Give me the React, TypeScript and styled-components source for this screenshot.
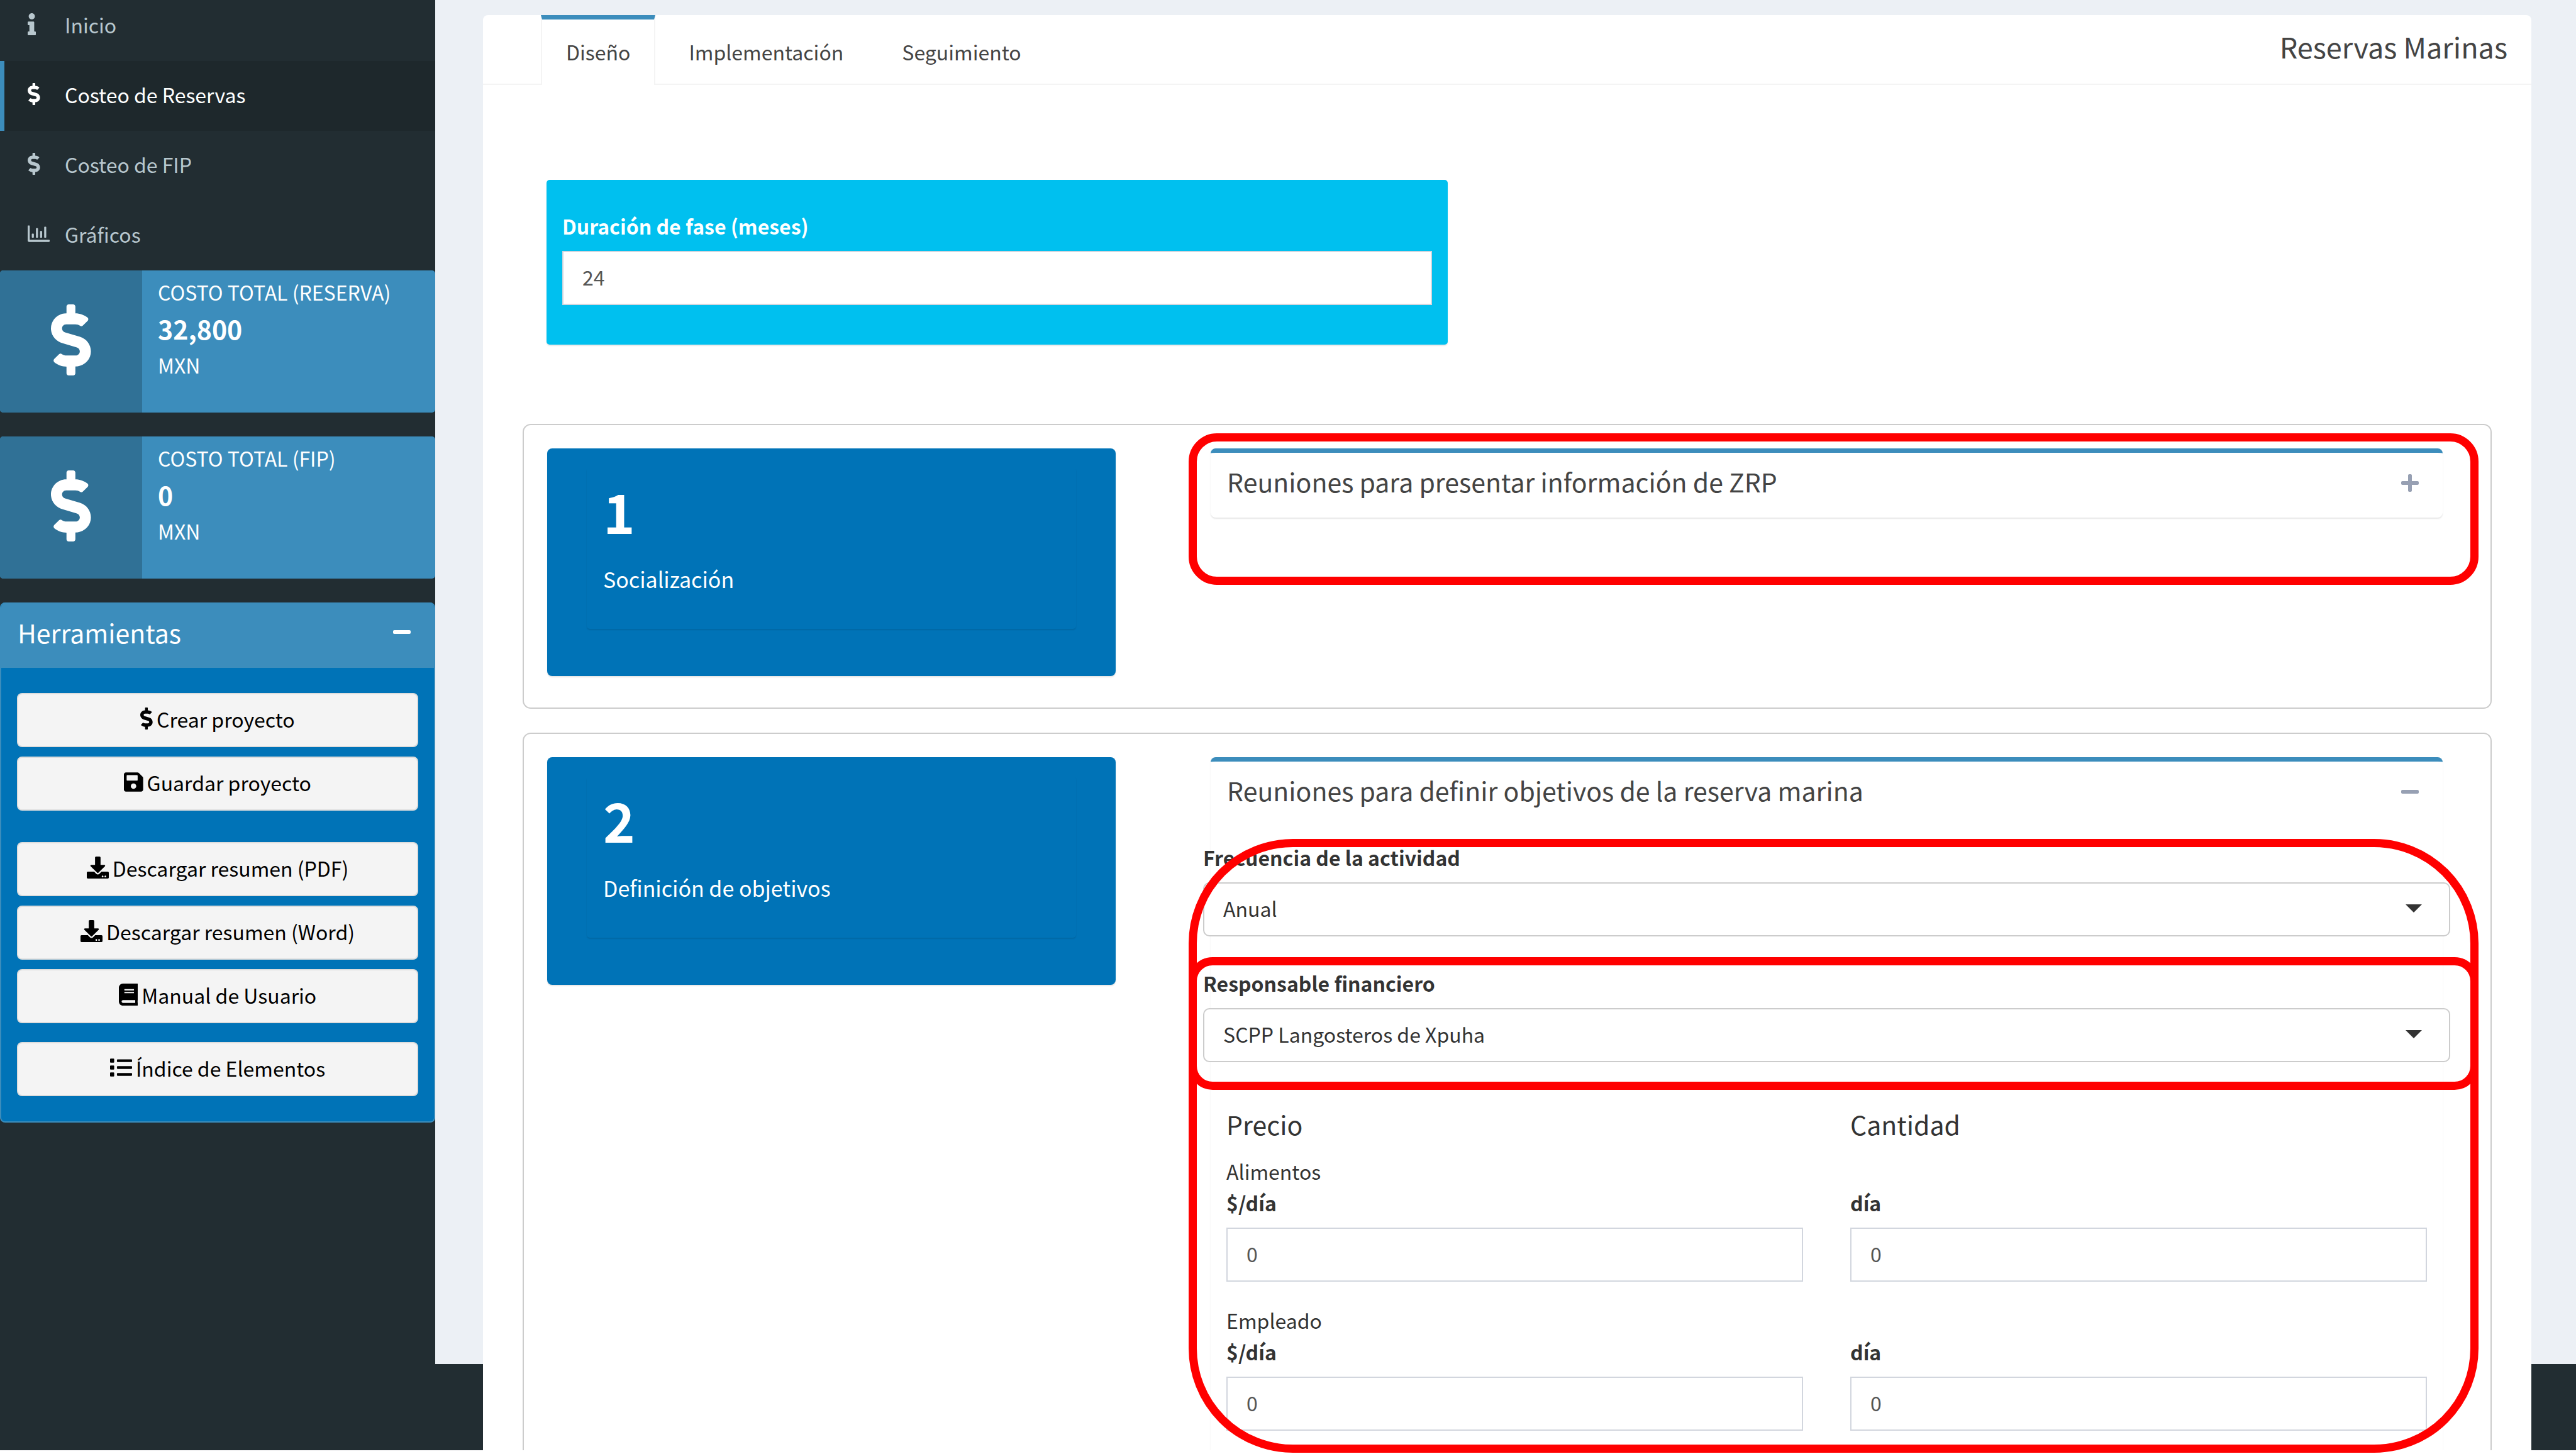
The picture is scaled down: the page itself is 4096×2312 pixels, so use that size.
import React, { useId, useState } from "react";
import styled, { createGlobalStyle, css } from "styled-components";
import type { IconType } from "react-icons";
import {
  FaBook,
  FaDollarSign,
  FaDownload,
  FaInfo,
  FaList,
  FaMinus,
  FaPlus,
  FaRegChartBar,
  FaSave,
} from "react-icons/fa";

const color = {
  dark: "#222d32",
  darker: "#1e282c",
  menuText: "#b8c7ce",
  primary: "#3c8dbc",
  primaryShade: "#307196",
  blue: "#0073b7",
  aqua: "#00c0ef",
  page: "#ecf0f5",
  line: "#f4f4f4",
  wellLine: "#cccccc",
  inputLine: "#d2d6de",
  heading: "#444444",
  text: "#333333",
  mark: "#ff0000",
};

const size = { text: "32px", lead: "34px", title: "41px", page: "45px", big: "86px" };

const GlobalStyle = createGlobalStyle`
  *, *::before, *::after { box-sizing: border-box; }
  body {
    margin: 0;
    background: #ffffff;
    color: ${color.text};
    font-family: "Noto Sans CJK SC", "Noto Sans", sans-serif;
    font-size: ${size.text};
    line-height: 50px;
  }
  button, input, select { font: inherit; color: inherit; margin: 0; }
  h1, h2, h3, p, ul { margin: 0; padding: 0; font-weight: 400; }
  svg { display: block; flex: none; }

  /* Narrow glyphs take only the width they draw */
  svg[viewBox="0 0 192 512"] { width: 0.375em; }
  svg[viewBox="0 0 288 512"] { width: 0.5625em; }
  svg[viewBox="0 0 448 512"] { width: 0.875em; }
`;

const Page = styled.div`
  position: relative;
  display: flex;
  align-items: flex-start;
  height: 100vh;
  overflow: hidden;
  background: ${color.dark};

  &::after {
    content: "";
    position: absolute;
    z-index: 1;
    left: 0;
    right: 0;
    bottom: 0;
    height: 6px;
    background: #ffffff;
  }
`;

/* ---------- Sidebar ---------- */

const Sidebar = styled.aside`
  flex: none;
  width: 692px;
`;

const Menu = styled.ul`
  list-style: none;
  margin-top: -14px;
`;

const MenuLink = styled.a<{ $active?: boolean }>`
  display: flex;
  align-items: center;
  height: 111px;
  padding: 0 13px 6px 37px;
  border-left: 7px solid ${(p) => (p.$active ? color.primary : "transparent")};
  background: ${(p) => (p.$active ? color.darker : "transparent")};
  color: ${(p) => (p.$active ? "#ffffff" : color.menuText)};
  text-decoration: none;
`;

const MenuIcon = styled.span`
  width: 59px;
  font-size: 35px;
`;

const InfoBox = styled.section`
  display: flex;
  height: 226px;
  margin-bottom: 38px;
  border-radius: 5px;
  overflow: hidden;
  background: ${color.primary};
  color: #ffffff;
`;

const InfoIcon = styled.div`
  display: flex;
  align-items: center;
  justify-content: center;
  width: 226px;
  padding-bottom: 5px;
  background: ${color.primaryShade};
  font-size: 113px;
`;

const InfoContent = styled.div`
  padding: 9px 25px;
`;

const InfoNumber = styled.strong`
  display: block;
  font-size: ${size.title};
  line-height: 66px;
`;

const Tools = styled.section`
  border: 2px solid ${color.primary};
  border-top: 0;
  border-radius: 8px;
  overflow: hidden;
  background: ${color.blue};
  color: #ffffff;
`;

const ToolsHeader = styled.header`
  display: flex;
  align-items: center;
  justify-content: space-between;
  padding: 22px 37px 32px 26px;
  background: ${color.primary};
`;

const BoxTitle = styled.h3`
  font-size: ${size.title};
`;

const ToggleButton = styled.button`
  padding: 0;
  border: 0;
  background: none;
  color: inherit;
  font-size: 32px;
  cursor: pointer;
`;

const ToolsBody = styled.div`
  display: flex;
  flex-direction: column;
  gap: 35px;
  padding: 40px 25px;
`;

const ToolGroup = styled.div`
  display: grid;
  gap: 15px;

  & + & { margin-top: 15px; }
  &:last-child { margin-top: -5px; }
`;

const ToolButton = styled.button`
  display: flex;
  align-items: center;
  justify-content: center;
  gap: 6px;
  height: 86px;
  padding: 0 30px 5px;
  border: 2px solid #dddddd;
  border-radius: 8px;
  background: ${color.line};
  color: #000000;
  cursor: pointer;

  svg { font-size: 35px; }
`;

/* ---------- Content ---------- */

const Content = styled.main`
  flex: 1;
  min-width: 0;
  height: calc(100vh - 143px);
  padding: 24px 71px 0 76px;
  background: ${color.page};
`;

const Panel = styled.div`
  padding-bottom: 100px;
  border-radius: 8px 8px 0 0;
  background: #ffffff;
`;

const PanelHeader = styled.header`
  display: flex;
  justify-content: space-between;
  padding: 0 38px 0 92px;
  border-bottom: 2px solid ${color.line};
`;

const TabList = styled.div`
  display: flex;
  gap: 13px;
  margin-bottom: -2px;
`;

const Tab = styled.button<{ $active?: boolean }>`
  padding: 26px 38px 28px;
  border: solid transparent;
  border-width: 7px 2px 0;
  background: transparent;
  color: ${color.heading};
  cursor: pointer;

  ${(p) =>
    p.$active &&
    css`
      border-color: ${color.primary} ${color.line} transparent;
      background: #ffffff;
    `}
`;

const PanelTitle = styled.h1`
  padding-top: 25px;
  color: ${color.heading};
  font-size: ${size.page};
`;

const Duration = styled.section`
  width: 44%;
  margin: 151px 0 126px 101px;
  padding: 48px 25px 63px;
  border-radius: 5px;
  background: ${color.aqua};
  box-shadow: 0 2px 2px rgba(0, 0, 0, 0.1);
  color: #ffffff;
`;

const Well = styled.section`
  display: grid;
  grid-template-columns: 6fr 13fr;
  align-items: start;
  gap: 151px;
  margin: 0 63px 38px;
  padding: 37px 76px 50px 37px;
  border: 2px solid ${color.wellLine};
  border-radius: 13px;
`;

const StepCard = styled.div`
  padding: 30px 63px 75px;
  border-radius: 8px;
  background: ${color.blue};
  box-shadow: 0 2px 2px rgba(0, 0, 0, 0.1);
  color: #ffffff;
`;

const StepInner = styled.div`
  padding: 24px 26px 54px;
  border-radius: 5px;
  box-shadow: 0 2px 2px rgba(0, 0, 0, 0.1);
`;

const StepNumber = styled.h2`
  margin-bottom: 39px;
  font-size: ${size.big};
  font-weight: 700;
  line-height: 90px;
`;

const StepName = styled.p`
  font-size: ${size.lead};
`;

const Column = styled.div`
  position: relative;
`;

const Box = styled.article`
  border-top: 7px solid ${color.primary};
  border-radius: 8px;
  background: #ffffff;
  box-shadow: 0 2px 2px rgba(0, 0, 0, 0.1);
`;

const BoxHeader = styled.header`
  display: flex;
  align-items: center;
  justify-content: space-between;
  padding: 20px 38px 33px 26px;
  color: ${color.heading};

  button {
    padding-top: 6px;
    color: #97a0b3;
  }
`;

const Choices = styled.div`
  display: grid;
  gap: 49px;
  margin: 24px -12px 73px;
`;

const Label = styled.label`
  display: block;
  margin-bottom: 15px;
  font-weight: 700;
`;

const control = css`
  display: block;
  width: 100%;
  height: 86px;
  padding: 0 30px 4px;
  background: #ffffff;
  outline: 0;
`;

const Input = styled.input`
  ${control}
  border: 2px solid ${color.inputLine};
  border-radius: 0;
  color: #555555;
  appearance: textfield;

  &::-webkit-inner-spin-button { appearance: none; }
`;

const SelectWrap = styled.div`
  position: relative;

  svg {
    position: absolute;
    top: 35px;
    right: 45px;
    pointer-events: none;
  }
`;

const Select = styled.select`
  ${control}
  border: 2px solid ${color.wellLine};
  border-radius: 10px;
  appearance: none;
`;

const Costs = styled.div`
  display: grid;
  grid-template-columns: 1fr 1fr;
  column-gap: 75px;
  row-gap: 36px;
  padding: 0 25px 80px;
`;

const CostHeading = styled.h3`
  margin-bottom: -11px;
  font-size: ${size.title};
`;

const CostCell = styled.div`
  display: flex;
  flex-direction: column;
  justify-content: flex-end;
`;

const Mark = styled.span<{ $top: number; $height: number; $radius: number }>`
  position: absolute;
  z-index: 2;
  top: ${(p) => p.$top}px;
  left: -35px;
  right: -57px;
  height: ${(p) => p.$height}px;
  border: 13px solid ${color.mark};
  border-radius: ${(p) => p.$radius}px;
  pointer-events: none;
`;

/* ---------- Data ---------- */

type Item = { icon: IconType; text: string };

const menu: Item[] = [
  { icon: FaInfo, text: "Inicio" },
  { icon: FaDollarSign, text: "Costeo de Reservas" },
  { icon: FaDollarSign, text: "Costeo de FIP" },
  { icon: FaRegChartBar, text: "Gráficos" },
];

const totals = [
  { name: "COSTO TOTAL (RESERVA)", amount: "32,800" },
  { name: "COSTO TOTAL (FIP)", amount: "0" },
];

const tools: Item[][] = [
  [
    { icon: FaDollarSign, text: "Crear proyecto" },
    { icon: FaSave, text: "Guardar proyecto" },
  ],
  [
    { icon: FaDownload, text: "Descargar resumen (PDF)" },
    { icon: FaDownload, text: "Descargar resumen (Word)" },
    { icon: FaBook, text: "Manual de Usuario" },
  ],
  [{ icon: FaList, text: "Índice de Elementos" }],
];

const tabs = ["Diseño", "Implementación", "Seguimiento"];

/* ---------- Parts ---------- */

function Field({ label, value }: { label: string; value: number }) {
  const id = useId();
  return (
    <div>
      <Label htmlFor={id}>{label}</Label>
      <Input id={id} type="number" defaultValue={value} />
    </div>
  );
}

function Choice({ label, options }: { label: string; options: string[] }) {
  const id = useId();
  return (
    <div>
      <Label htmlFor={id}>{label}</Label>
      <SelectWrap>
        <Select id={id}>
          {options.map((o) => (
            <option key={o}>{o}</option>
          ))}
        </Select>
        <svg width="26" height="13" viewBox="0 0 26 13" aria-hidden="true">
          <path d="M0 0h26L13 13z" fill={color.text} />
        </svg>
      </SelectWrap>
    </div>
  );
}

function Step({ number, name }: { number: number; name: string }) {
  return (
    <StepCard>
      <StepInner>
        <StepNumber>{number}</StepNumber>
        <StepName>{name}</StepName>
      </StepInner>
    </StepCard>
  );
}

function Activity({
  title,
  startOpen = false,
  children,
}: {
  title: string;
  startOpen?: boolean;
  children?: React.ReactNode;
}) {
  const [open, setOpen] = useState(startOpen);
  return (
    <Box>
      <BoxHeader>
        <BoxTitle>{title}</BoxTitle>
        <ToggleButton
          type="button"
          aria-label={open ? "Contraer" : "Expandir"}
          onClick={() => setOpen(!open)}
        >
          {open ? <FaMinus /> : <FaPlus />}
        </ToggleButton>
      </BoxHeader>
      {open && children}
    </Box>
  );
}

function Cost({ name }: { name: string }) {
  return (
    <>
      <CostCell>
        <p>{name}</p>
        <Field label="$/día" value={0} />
      </CostCell>
      <CostCell>
        <Field label="día" value={0} />
      </CostCell>
    </>
  );
}

export default function App() {
  const [tab, setTab] = useState(tabs[0]);

  return (
    <>
      <GlobalStyle />
      <Page>
        <Sidebar>
          <nav>
            <Menu>
              {menu.map(({ icon: Icon, text }, i) => (
                <li key={text}>
                  <MenuLink href="#" $active={i === 1}>
                    <MenuIcon>
                      <Icon />
                    </MenuIcon>
                    {text}
                  </MenuLink>
                </li>
              ))}
            </Menu>
          </nav>

          {totals.map((t) => (
            <InfoBox key={t.name}>
              <InfoIcon>
                <FaDollarSign />
              </InfoIcon>
              <InfoContent>
                <p>{t.name}</p>
                <InfoNumber>{t.amount}</InfoNumber>
                <p>MXN</p>
              </InfoContent>
            </InfoBox>
          ))}

          <Tools>
            <ToolsHeader>
              <BoxTitle>Herramientas</BoxTitle>
              <ToggleButton type="button" aria-label="Contraer">
                <FaMinus />
              </ToggleButton>
            </ToolsHeader>
            <ToolsBody>
              {tools.map((group, i) => (
                <ToolGroup key={i}>
                  {group.map(({ icon: Icon, text }) => (
                    <ToolButton type="button" key={text}>
                      <Icon />
                      {text}
                    </ToolButton>
                  ))}
                </ToolGroup>
              ))}
            </ToolsBody>
          </Tools>
        </Sidebar>

        <Content>
          <Panel>
            <PanelHeader>
              <TabList role="tablist">
                {tabs.map((t) => (
                  <Tab
                    key={t}
                    type="button"
                    role="tab"
                    aria-selected={t === tab}
                    $active={t === tab}
                    onClick={() => setTab(t)}
                  >
                    {t}
                  </Tab>
                ))}
              </TabList>
              <PanelTitle>Reservas Marinas</PanelTitle>
            </PanelHeader>

            <Duration>
              <Field label="Duración de fase (meses)" value={24} />
            </Duration>

            <Well>
              <Step number={1} name="Socialización" />
              <Column>
                <Activity title="Reuniones para presentar información de ZRP" />
                <Mark $top={-24} $height={241} $radius={45} />
              </Column>
            </Well>

            <Well>
              <Step number={2} name="Definición de objetivos" />
              <Column>
                <Activity title="Reuniones para definir objetivos de la reserva marina" startOpen>
                  <Choices>
                    <Choice label="Frecuencia de la actividad" options={["Anual"]} />
                    <Choice
                      label="Responsable financiero"
                      options={["SCPP Langosteros de Xpuha"]}
                    />
                  </Choices>
                  <Costs>
                    <CostHeading>Precio</CostHeading>
                    <CostHeading>Cantidad</CostHeading>
                    <Cost name="Alimentos" />
                    <Cost name="Empleado" />
                  </Costs>
                </Activity>
                <Mark $top={130} $height={976} $radius={166} />
                <Mark $top={318} $height={211} $radius={38} />
              </Column>
            </Well>
          </Panel>
        </Content>
      </Page>
    </>
  );
}
